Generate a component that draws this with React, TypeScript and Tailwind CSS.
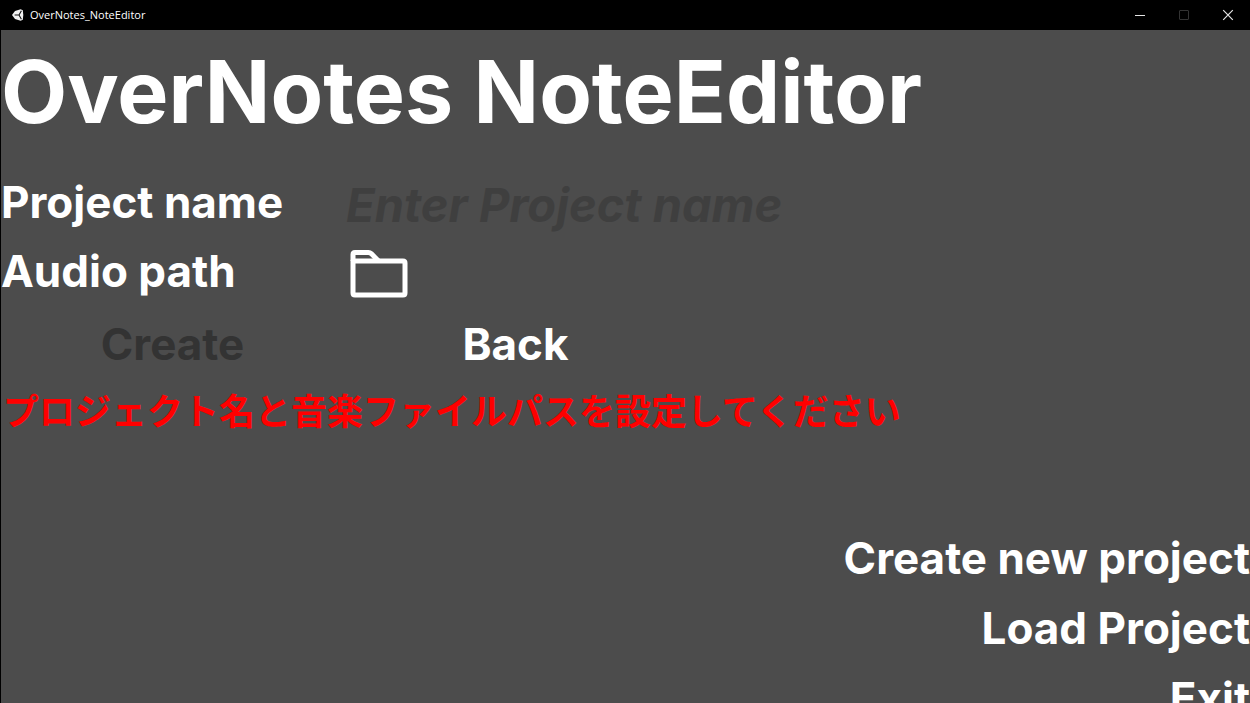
import React from 'react';

const menuItems = ['Create new project', 'Load Project', 'Exit'];

const TitleBar: React.FC = () => (
  <header className="flex h-[30px] shrink-0 items-center justify-between bg-black pl-3 font-['Open_Sans',sans-serif] text-[11px] text-white">
    <div className="flex items-center gap-1.5">
      <svg className="size-3" viewBox="0 0 12 12" aria-hidden="true">
        <path d="M0 6 L3 2 L8.6 0.3 L10.8 1.2 L11.3 6 L10.8 10.8 L8.6 11.7 L3 10 Z" fill="#f2f2f2" />
        <path d="M2.6 6 H7 M7 6 L9.4 1.8 M7 6 L9.4 10.2" stroke="#111" strokeWidth="1.1" fill="none" />
      </svg>
      <span>OverNotes_NoteEditor</span>
    </div>
    <div className="flex h-full">
      <button type="button" aria-label="Minimize" className="grid w-11 place-items-center">
        <svg className="size-3" viewBox="0 0 12 12">
          <path d="M1 6.5 H11" stroke="#e5e5e5" />
        </svg>
      </button>
      <button type="button" aria-label="Maximize" disabled className="grid w-11 place-items-center">
        <svg className="size-3" viewBox="0 0 12 12">
          <rect x="1.5" y="1.5" width="9" height="9" rx="0.5" stroke="#333" fill="none" />
        </svg>
      </button>
      <button type="button" aria-label="Close" className="grid w-11 place-items-center">
        <svg className="size-3" viewBox="0 0 12 12">
          <path d="M1.2 1.2 L10.8 10.8 M10.8 1.2 L1.2 10.8" stroke="#e5e5e5" strokeWidth="1.2" />
        </svg>
      </button>
    </div>
  </header>
);

const App: React.FC = () => {
  return (
    <div className="flex h-screen flex-col overflow-hidden bg-[#4c4c4c] font-['Inter',sans-serif] text-white">
      <TitleBar />

      <main className="flex min-h-0 flex-1 flex-col border-l border-black">
        <h1 className="mb-3.5 text-[86px] leading-[124px] font-bold whitespace-nowrap">OverNotes NoteEditor</h1>

        {/* Project form */}
        <form className="text-[44px] leading-[69px] font-bold">
          <div className="grid grid-cols-[345px_1fr]">
            <label htmlFor="project-name">Project name</label>
            <input
              id="project-name"
              type="text"
              placeholder="Enter Project name"
              className="-mb-1 h-[73px] w-full bg-transparent text-[47px] italic outline-none placeholder:text-[#3f3f3f]"
            />
          </div>
          <div className="grid grid-cols-[345px_1fr] items-center">
            <span>Audio path</span>
            <button type="button" aria-label="Choose audio file" className="w-fit pt-1 pl-1">
              <svg className="h-12 w-[58px]" viewBox="0 0 58 48" fill="none" stroke="white" strokeWidth="5" strokeLinejoin="round">
                <path d="M3 11 V4.5 Q3 2.5 5 2.5 H18.5 Q20 2.5 21.2 3.6 L28.5 11" />
                <path d="M3 11 H53 Q55 11 55 13 V43 Q55 45 53 45 H5 Q3 45 3 43 Z" />
              </svg>
            </button>
          </div>
          <div className="mt-1 grid grid-cols-[343px_343px]">
            <button type="submit" disabled className="text-[#333]">Create</button>
            <button type="button">Back</button>
          </div>
        </form>

        <p role="alert" className="pl-0.5 font-['Noto_Sans_CJK_JP',sans-serif] text-[36px] leading-[60px] font-bold whitespace-nowrap text-[#f00]">
          プロジェクト名と音楽ファイルパスを設定してください
        </p>

        {/* Main menu, the last entry runs off the window */}
        <nav className="mt-auto -mb-[30px] flex shrink-0 flex-col items-end text-[44px] leading-[70px] font-bold">
          {menuItems.map((item) => (
            <button key={item} type="button">{item}</button>
          ))}
        </nav>
      </main>
    </div>
  );
};

export default App;
